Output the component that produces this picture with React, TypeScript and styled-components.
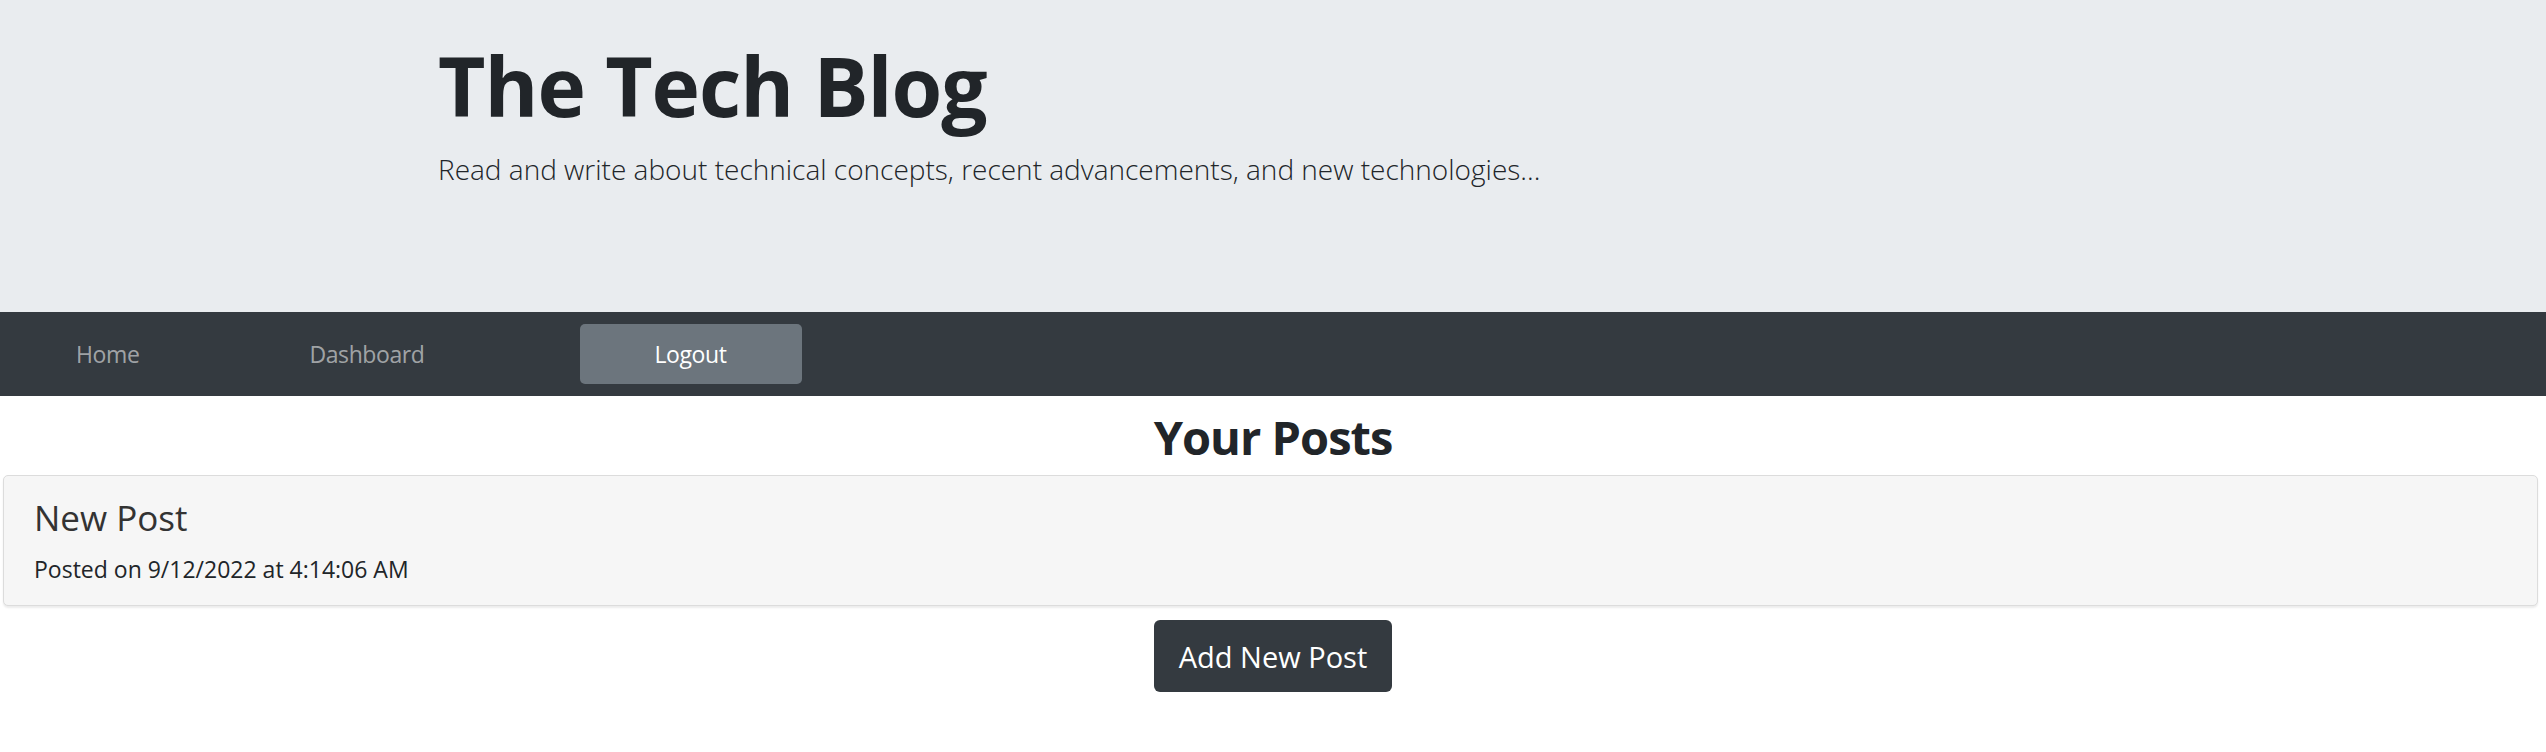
import styled, { createGlobalStyle } from "styled-components";

const GlobalStyle = createGlobalStyle`
  body {
    margin: 0;
    background: #fff;
    font-family: "Open Sans", "Noto Sans", sans-serif;
    color: #212529;
  }
`;

export default function App() {
  return (
    <>
      <GlobalStyle />
      <Jumbotron>
        <Title>The Tech Blog</Title>
        <Lead>Read and write about technical concepts, recent advancements, and new technologies...</Lead>
      </Jumbotron>
      <NavBar>
        <NavLink href="#" $first>Home</NavLink>
        <NavLink href="#">Dashboard</NavLink>
        <LogoutButton type="button">Logout</LogoutButton>
      </NavBar>
      <Main>
        <Heading>Your Posts</Heading>
        <PostCard>
          <PostTitle>New Post</PostTitle>
          <PostMeta>Posted on 9/12/2022 at 4:14:06 AM</PostMeta>
        </PostCard>
        <AddButton type="button">Add New Post</AddButton>
      </Main>
    </>
  );
}

const Jumbotron = styled.header`
  height: 312px;
  box-sizing: border-box;
  padding: 44px 0 0 438px;
  background: #e9ecef;
`;

const Title = styled.h1`
  margin: 0;
  font-size: 82px;
  line-height: 1;
  font-weight: 700;
  letter-spacing: -1px;
  color: #212529;
`;

const Lead = styled.p`
  margin: 29px 0 0;
  font-size: 28px;
  line-height: 1;
  font-weight: 300;
  color: #212529;
`;

const NavBar = styled.nav`
  display: flex;
  align-items: center;
  height: 84px;
  background: #343a40;
`;

const NavLink = styled.a<{ $first?: boolean }>`
  margin-left: ${(p) => (p.$first ? "76px" : "170px")};
  font-size: 23px;
  letter-spacing: -0.4px;
  color: rgba(255, 255, 255, 0.55);
  text-decoration: none;
`;

const LogoutButton = styled.button`
  margin-left: 155px;
  width: 222px;
  height: 60px;
  border: none;
  border-radius: 5px;
  background: #6c757d;
  color: #fff;
  font-family: inherit;
  font-size: 23px;
  letter-spacing: -0.4px;
`;

const Main = styled.main`
  display: flex;
  flex-direction: column;
  align-items: center;
`;

const Heading = styled.h2`
  margin: 18px 0 14px;
  font-size: 47px;
  line-height: 1;
  font-weight: 700;
  letter-spacing: -1px;
  color: #212529;
`;

const PostCard = styled.article`
  align-self: stretch;
  margin: 0 8px 0 3px;
  padding: 24px 30px 24px;
  border: 1px solid #dcdcdc;
  border-radius: 5px;
  background: #f6f6f6;
  box-shadow: 0 2px 2px rgba(0, 0, 0, 0.08);
`;

const PostTitle = styled.h3`
  margin: 0;
  font-size: 35px;
  line-height: 1;
  font-weight: 400;
  color: #333;
`;

const PostMeta = styled.p`
  margin: 23px 0 0;
  font-size: 23px;
  line-height: 1;
  color: #212529;
`;

const AddButton = styled.button`
  margin-top: 14px;
  height: 72px;
  padding: 0 25px;
  border: none;
  border-radius: 6px;
  background: #343a40;
  color: #fff;
  font-family: inherit;
  font-size: 29px;
`;
